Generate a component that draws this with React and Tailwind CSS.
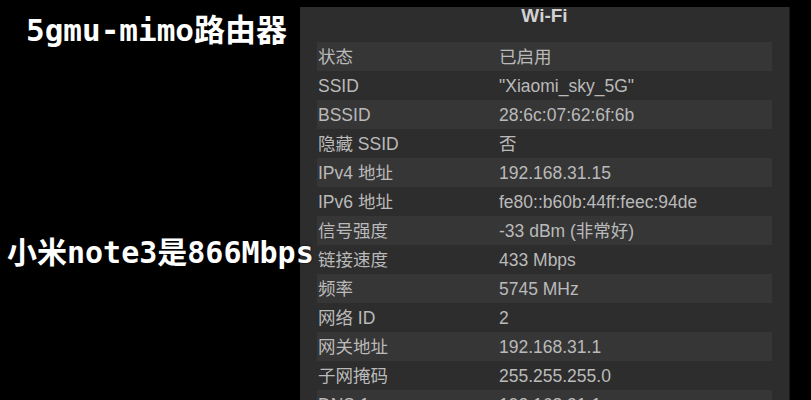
import React from 'react';

const rows = [
  ['状态', '已启用'],
  ['SSID', '"Xiaomi_sky_5G"'],
  ['BSSID', '28:6c:07:62:6f:6b'],
  ['隐藏 SSID', '否'],
  ['IPv4 地址', '192.168.31.15'],
  ['IPv6 地址', 'fe80::b60b:44ff:feec:94de'],
  ['信号强度', '-33 dBm (非常好)'],
  ['链接速度', '433 Mbps'],
  ['频率', '5745 MHz'],
  ['网络 ID', '2'],
  ['网关地址', '192.168.31.1'],
  ['子网掩码', '255.255.255.0'],
  ['DNS 1', '192.168.31.1'],
];

const App = () => {
  return (
    <div className="relative w-[811px] h-[400px] bg-black overflow-hidden flex">
      <div className="w-[300px] shrink-0" />

      {/* Wi-Fi details panel */}
      <div className="mt-[7px] w-[490px] shrink-0 bg-[#2d2d2d] border-r border-[#1a1a1a] font-['Liberation_Sans','Noto_Sans_CJK_SC',sans-serif]">
        <div className="h-[35px] text-center text-[19px] leading-[17px] font-bold text-[#d2d2d2]">
          Wi-Fi
        </div>
        <div className="pl-[17px] pr-[17px]">
          {rows.map(([label, value], i) => (
            <div
              key={label}
              className={`h-[29px] pt-[2px] flex items-center text-[17.5px] text-[#bababa] ${i % 2 === 0 ? 'bg-[#363636]' : ''}`}
            >
              <span className="w-[182px] pl-[1px] shrink-0">{label}</span>
              <span>{value}</span>
            </div>
          ))}
        </div>
      </div>

      {/* video captions */}
      <div className="absolute left-[26px] top-[15px] text-[31px] leading-[31px] font-bold text-white font-['DejaVu_Sans_Mono','Noto_Sans_CJK_SC',monospace] whitespace-nowrap">
        5gmu-mimo路由器
      </div>
      <div className="absolute left-[7px] top-[238px] text-[30px] leading-[30px] font-bold text-white font-['DejaVu_Sans_Mono','Noto_Sans_CJK_SC',monospace] whitespace-nowrap [text-shadow:0_0_2px_#000]">
        小米note3是866Mbps
      </div>
    </div>
  );
};

export default App;
